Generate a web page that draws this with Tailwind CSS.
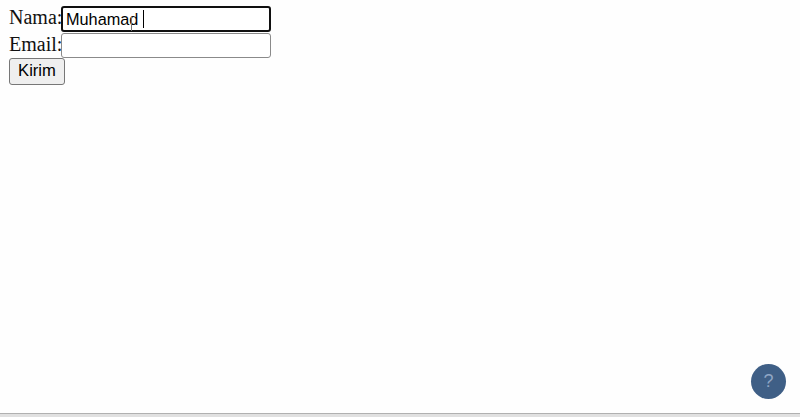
<!DOCTYPE html>
<html>
<head>
<meta charset="utf-8">
<script src="https://cdn.jsdelivr.net/npm/@tailwindcss/browser@4"></script>
</head>
<body class="relative h-[417px] w-[800px] overflow-hidden bg-[#fefefe] font-['Liberation_Serif',serif] text-[#111]">
<div class="flex h-[413px] flex-col pl-[9px] pt-[6px] text-[20px]">
  <div class="flex h-[26px] items-center">
    <label class="w-[52px] pb-[4px] leading-[24px]">Nama:</label>
    <div class="relative flex h-[26px] w-[210px] items-center rounded-[3px] border-2 border-[#101010] bg-white pl-[3px] font-['Liberation_Sans',sans-serif] text-[16.3px] text-black">
      <span>Muhamad</span>
      <span class="ml-[5px] h-[18px] w-px bg-black"></span>
      <span class="absolute left-[68px] top-[9px] h-[14px] w-px bg-[#777]"></span>
    </div>
  </div>
  <div class="mt-[1px] flex h-[25px] items-center">
    <label class="w-[52px] pb-[3px] leading-[24px]">Email:</label>
    <div class="h-[25px] w-[210px] rounded-[3px] border border-[#8a8a8a] bg-white"></div>
  </div>
  <button class="flex h-[27px] w-[56px] items-center justify-center rounded-[3px] border border-[#777] bg-[#efefef] font-['Liberation_Sans',sans-serif] text-[16.6px] text-black">Kirim</button>
</div>
<button class="absolute left-[751px] top-[364px] flex h-[35px] w-[35px] items-center justify-center rounded-full bg-[#3f5f86] font-['Liberation_Sans',sans-serif] text-[18px] text-[#8fa6c4]">?</button>
<div class="h-[4px] border-t border-[#b0b0b0] bg-[#e0e0e0]"></div>
</body>
</html>
